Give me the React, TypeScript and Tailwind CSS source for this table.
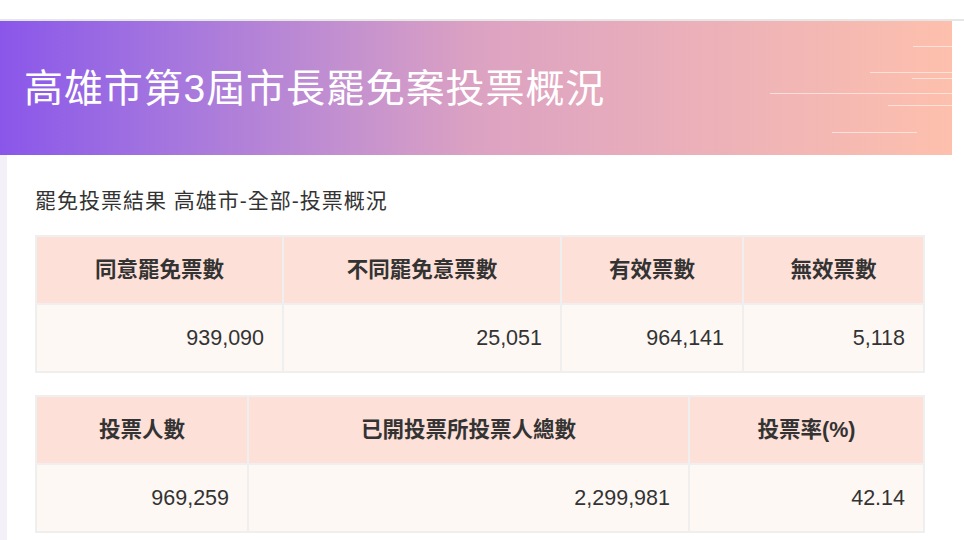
const font = "font-['Liberation_Sans','Noto_Sans_CJK_TC',sans-serif]";

const votes = [
  { label: "同意罷免票數", value: "939,090", w: "w-[247px]" },
  { label: "不同罷免意票數", value: "25,051", w: "w-[278px]" },
  { label: "有效票數", value: "964,141", w: "w-[182px]" },
  { label: "無效票數", value: "5,118", w: "w-[181px]" },
];

const turnout = [
  { label: "投票人數", value: "969,259", w: "w-[212px]" },
  { label: "已開投票所投票人總數", value: "2,299,981", w: "w-[441px]" },
  { label: "投票率(%)", value: "42.14", w: "w-[235px]" },
];

type Col = { label: string; value: string; w: string };

const StatTable = ({ cols }: { cols: Col[] }) => (
  <table className="border-collapse table-fixed w-[888px]">
    <thead>
      <tr>
        {cols.map((c) => (
          <th
            key={c.label}
            className={`${c.w} h-[68px] border-2 border-[#efefef] bg-[#fde0d8] text-center text-[21.5px] font-bold text-[#333]`}
          >
            {c.label}
          </th>
        ))}
      </tr>
    </thead>
    <tbody>
      <tr>
        {cols.map((c) => (
          <td
            key={c.label}
            className="h-[68px] border-2 border-[#efefef] bg-[#fef8f5] pr-[18px] text-right text-[21.5px] text-[#333]"
          >
            {c.value}
          </td>
        ))}
      </tr>
    </tbody>
  </table>
);

const Banner = () => (
  <div className="relative h-[134px] w-[952px] bg-gradient-to-r from-[#8a56ea] via-[#dca2c2] to-[#fdc0ad] flex items-center">
    <h1 className="pl-[24px] text-[39px] tracking-[0.9px] text-white leading-none">
      高雄市第3屆市長罷免案投票概況
    </h1>
    <svg className="absolute inset-0" width="952" height="134" viewBox="0 0 952 134">
      <g stroke="white" strokeOpacity="0.55" strokeWidth="1">
        <line x1="913" y1="25.5" x2="952" y2="25.5" />
        <line x1="870" y1="51.5" x2="952" y2="51.5" />
        <line x1="912" y1="57.5" x2="952" y2="57.5" />
        <line x1="770" y1="72.5" x2="952" y2="72.5" />
        <line x1="888" y1="84.5" x2="952" y2="84.5" />
        <line x1="832" y1="111.5" x2="917" y2="111.5" />
      </g>
    </svg>
  </div>
);

export default function App() {
  return (
    <div className={`${font} w-[964px] h-[540px] overflow-hidden bg-white`}>
      <div className="h-[19px]" />
      <div className="h-[2px] bg-[#e6e6e6]" />
      <Banner />
      <div className="flex">
        <div className="w-[7px] h-[400px] bg-[#f4f0f8]" />
        <div className="pl-[28px] pt-[33px]">
          <p className="text-[21px] leading-[25px] tracking-[1px] text-[#333]">罷免投票結果 高雄市-全部-投票概況</p>
          <div className="mt-[22px]">
            <StatTable cols={votes} />
          </div>
          <div className="mt-[22px]">
            <StatTable cols={turnout} />
          </div>
        </div>
      </div>
    </div>
  );
}
